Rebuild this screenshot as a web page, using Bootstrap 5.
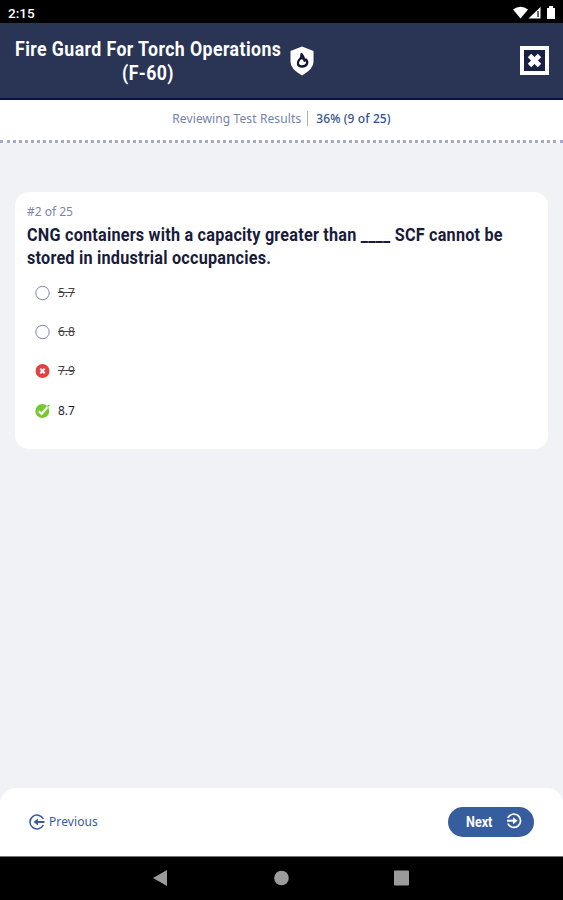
<!DOCTYPE html>
<html lang="en">
<head>
<meta charset="utf-8">
<meta name="viewport" content="width=device-width, initial-scale=1">
<title>Fire Guard For Torch Operations (F-60)</title>
<link href="https://cdn.jsdelivr.net/npm/bootstrap@5.3.0/dist/css/bootstrap.min.css" rel="stylesheet">
<style>
body{font-family:"Noto Sans",sans-serif;font-size:12px;line-height:18px;background:#f0f2f6;color:#1a1d38}
svg{display:block;flex:none}
.status-bar{height:23px;background:#000;font:500 13.5px/24px Roboto,sans-serif;padding:2px 6px 0 8px}
.app-header{height:77px;background:#2a3454;border-bottom:2px solid #0c1142;padding:0 14px 0 15px}
.condensed{font-family:Roboto,sans-serif;font-weight:700;white-space:nowrap}
.condensed span{display:block;transform-origin:0 50%}
.app-title{width:266px;font-size:20px;line-height:24.5px;letter-spacing:.48px;margin-top:1px}
.app-title .line-a{transform:scaleX(.885)}
.app-title .line-b{transform:scaleX(.885);transform-origin:50% 50%}
.result-strip{height:43px;border-bottom:3px dotted #a5aacb;color:#7482ad;padding-bottom:3px;letter-spacing:.11px}
.result-strip .score{color:#2f528f;font-weight:500}
.divider{width:1px;height:15px;background:#a9b1cf;margin:0 8px 0 6px}
.question-card{margin:49px 15px 0;height:257px;border-radius:14px;padding:11px 12px}
.counter{color:#7c85ad}
.question{font-size:18px;line-height:22.5px;letter-spacing:.245px;color:#191b3a;margin-top:3px}
.question span{transform:scaleX(.9)}
.answers{padding:15px 0 0 8px}
.answer{height:39.2px;gap:8px}
.answer s{color:#444}
.bottom-bar{height:68px;border-radius:16px 16px 0 0;padding:0 29px}
.prev{color:#3a5b9c;gap:4px;letter-spacing:.1px}
.next{width:86px;height:30px;background:#365e9f;padding:0 12px 0 18px}
.next b{font:700 14px/18px Roboto,sans-serif;transform:scaleX(.9);transform-origin:0 50%}
.system-nav{height:44px;background:#000;border-top:1px solid #777;padding:0 1px 1px 0}
</style>
</head>
<body>
<div class="d-flex flex-column vh-100 overflow-hidden">
  <div class="status-bar d-flex justify-content-between align-items-center text-white">
    <span>2:15</span>
    <svg width="44" height="14" viewBox="0 0 44 14" fill="#fff"><path d="M0 3.5Q7.5-2 15 3.5L7.5 12.5Z"/><path d="M27.5 1v11.500H15.500Z"/><path d="M25 5v6" stroke="#333" stroke-width="1.500"/><path d="M34 2h2V0h4v2h2v11h-8z"/></svg>
  </div>
  <header class="app-header d-flex align-items-center text-white">
    <h1 class="app-title condensed mb-0"><span class="line-a">Fire Guard For Torch Operations</span><span class="line-b text-center">(F-60)</span></h1>
    <svg class="ms-2" width="26" height="30" viewBox="0 0 26 30"><path d="M13 .500 24.500 5v11q0 7-11.500 13.500Q1.500 23 1.500 16V5Z" fill="#fff"/><path d="M12.500 8q.500 3-2 5.500c-2.500 2.500-2.500 7 2.500 7s6.500-4 4-7l-1.500 1.200Q15 10.500 12.500 8Z" fill="#fff" stroke="#101638" stroke-width="2.300" stroke-linejoin="round"/><path d="M12.500 8 11.500 13l3 1Z" fill="#101638"/></svg>
    <button class="btn p-0 border-0 ms-auto" aria-label="Close"><svg width="29" height="29" viewBox="0 0 29 29"><path d="M2 2h25v25H2z" fill="#192044" stroke="#fff" stroke-width="4"/><path d="m9.500 9.500 10 10m0-10-10 10" stroke="#fff" stroke-width="4.800"/></svg></button>
  </header>
  <div class="result-strip bg-white d-flex justify-content-center align-items-center flex-shrink-0"><span>Reviewing Test Results</span><i class="divider"></i><span class="score">36% (9 of 25)</span></div>
  <main class="flex-grow-1">
    <section class="question-card bg-white">
      <div class="counter">#2 of 25</div>
      <h2 class="question condensed mb-0"><span>CNG containers with a capacity greater than ____ SCF cannot be</span><span>stored in industrial occupancies.</span></h2>
      <div class="answers">
        <div class="answer d-flex align-items-start"><svg width="15" height="18" viewBox="0 0 15 18"><circle cx="7.500" cy="9" r="6.700" fill="none" stroke="#8086af"/></svg><s>5.7</s></div>
        <div class="answer d-flex align-items-start"><svg width="15" height="18" viewBox="0 0 15 18"><circle cx="7.500" cy="9" r="6.700" fill="none" stroke="#8086af"/></svg><s>6.8</s></div>
        <div class="answer d-flex align-items-start"><svg width="15" height="18" viewBox="0 0 15 18"><circle cx="7.500" cy="9" r="7" fill="#e24141"/><path d="m5.300 6.800 4.400 4.400m0-4.400-4.400 4.400" stroke="#fff" stroke-width="2"/></svg><s>7.9</s></div>
        <div class="answer d-flex align-items-start"><svg width="15" height="18" viewBox="0 0 15 18"><circle cx="7.300" cy="9" r="7" fill="#78c832"/><path d="m3.800 9.300 2.800 2.700L12.500 5" fill="none" stroke="#fff" stroke-width="2"/><path d="m12.500 3 2.500 0-2 2.500" fill="#78c832"/></svg><span>8.7</span></div>
      </div>
    </section>
  </main>
  <footer class="bottom-bar bg-white d-flex justify-content-between align-items-center">
    <a class="prev d-flex align-items-center text-decoration-none" href="#"><svg width="16" height="16" viewBox="0 0 16 16" fill="none" stroke="#3a5b9c" stroke-width="1.600"><path d="M14.300 5a7 7 0 1 0 0 6"/><path d="M15.500 8H7" stroke-width="2"/><path d="M9 4.500 4.500 8 9 11.500Z" fill="#3a5b9c" stroke="none"/></svg><span>Previous</span></a>
    <button class="next btn rounded-pill border-0 text-white d-flex justify-content-between align-items-center"><b>Next</b><svg width="16" height="18" viewBox="0 0 16 18" fill="none" stroke="#fff" stroke-width="1.700"><path d="M1.800 5a6.700 6.700 0 1 1 0 5.500"/><path d="M1 7.700h8" stroke-width="2"/><path d="m7 4.200 4.500 3.500L7 11.200Z" fill="#fff" stroke="none"/></svg></button>
  </footer>
  <nav class="system-nav d-flex flex-shrink-0 justify-content-center align-items-center"><svg width="258" height="16" viewBox="0 0 258 16" fill="#9b9b9b"><path d="M1 8 15 0v16Z"/><circle cx="129.500" cy="8" r="7.300"/><rect x="242" y=".5" width="15" height="15" rx="1"/></svg></nav>
</div>
<script src="https://cdn.jsdelivr.net/npm/bootstrap@5.3.0/dist/js/bootstrap.bundle.min.js"></script>
</body>
</html>
